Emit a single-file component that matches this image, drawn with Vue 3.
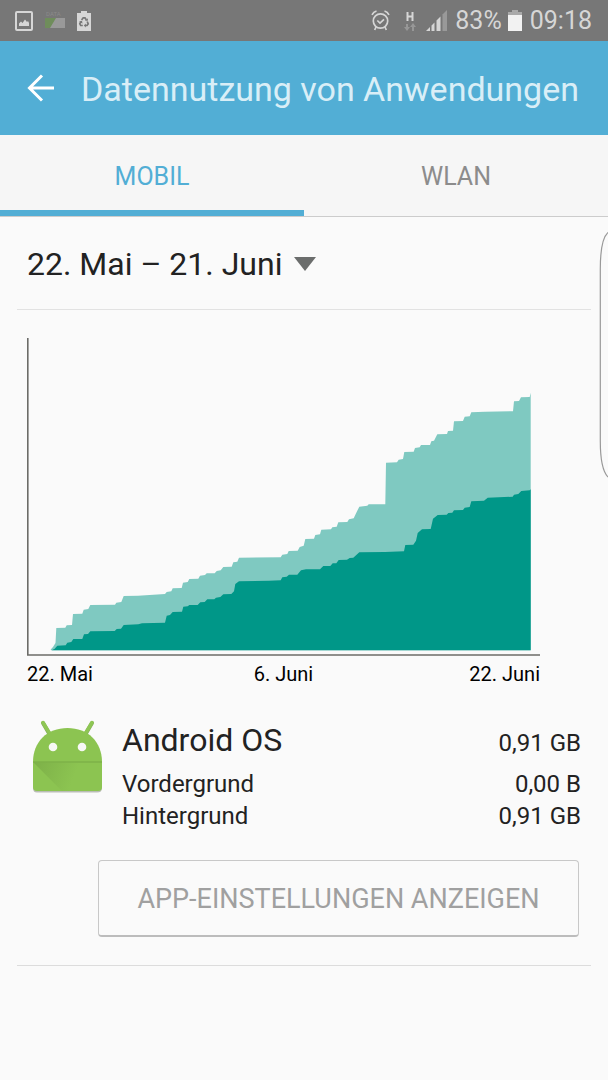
<script setup>
import { ref } from 'vue'

const tabs = ['MOBIL', 'WLAN']
const activeTab = ref('MOBIL')
const period = ref('22. Mai – 21. Juni')
const periods = ['22. Mai – 21. Juni']
const axisLabels = ['22. Mai', '6. Juni', '22. Juni']
const usage = [
  { label: 'Vordergrund', value: '0,00 B' },
  { label: 'Hintergrund', value: '0,91 GB' },
]

const totalPoints =
  '51,650.3 50.7,649.5 53,647 55.5,643 56.3,628 65.3,627.7 66.7,625.3 72,625 73,614 82.3,613.7 83.7,609.7 88.3,609 90.3,605 115,604.7 116.3,602.7 121.3,602 123.7,596 138,595.7 165,594 166.7,592 171.3,591.3 172.7,588.3 181.7,588 183,582.7 187.7,582 189.3,579 198.3,578.7 200,575.7 205,575 206.7,573.3 214.7,573.3 216.7,571 220.7,570.3 223.3,567 231.7,566.7 233.3,562.3 237.3,561.7 239,557.7 280.7,557.3 282.3,554.7 287.3,554 288.7,551 297.7,550.7 299.7,547 303.7,545.7 305.3,539 314,538.7 315.3,535 320,534.3 321.3,529.7 331,529.3 332.3,527.3 336.7,526.7 338.3,522.3 347.3,522 349,519.3 353.7,518.3 355.7,514 359.3,506.7 367.3,505.7 368.7,504.3 385.3,504.3 386,462.7 397,462.3 398.7,459.7 403,459 404.3,452 413.7,451.7 415,448 419.7,447.3 421,445 430,445 431.3,441.3 434,440.7 437.3,434.3 447,434 448,431 453,430.7 454,421.3 463,421 464.7,416.7 469.7,416.3 471.3,412.3 485,411.7 513,411.3 514,401.3 519,401 521,397.3 529.7,397 530.7,392.7 530.7,650.3'
const appPoints =
  '51.7,650.3 54.7,648.7 57.3,645.7 65.7,645.3 67.3,642.7 71.3,642 73.3,639 82.3,639 84,634.3 88,634 90.3,631.3 114.7,631 116.7,629 121,628.7 123.7,625 138.3,624.3 142,623.3 165,622.7 166.7,615.7 170,615 172.7,612 182,611.7 183.3,606.7 187.7,606.3 189.3,605 197.7,605 200.3,602.3 204.7,602 207.3,599.3 214.3,599.3 216,597.7 220.3,597 223.3,594.3 231.3,594 234,591.3 235.3,584 239,581.3 269,580.7 280.7,580.3 282.3,577.3 286.7,576.7 289,574.7 297.3,574.7 301,570.3 306,569.3 320,569.3 323.3,566 330.3,566 332.7,563.3 336.3,563.3 338.7,560 347,559.7 349.7,558 353.3,557.7 359.3,552.3 385,552 404,551.3 405.3,545 413.3,544.7 416,540.7 417.7,533 422,529.3 430.7,529 433,518.7 437.7,515 446.7,514.7 448.3,513 452.3,512.7 454,510.3 463,510 464.7,507.7 469.7,507 471.3,501.3 484,500.7 487.7,497.7 512.7,496.7 514,494.7 518.3,494 521.3,491 529.7,490.3 530.7,489.3 530.7,650.3'
</script>

<template>
  <div class="screen">
    <div class="status">
      <div class="status-left">
        <svg width="18" height="20" viewBox="0 0 18 20" aria-hidden="true">
          <rect x="1" y="1" width="16" height="18" rx="1" fill="none" stroke="#d6d6d6" stroke-width="2" />
          <path d="M4 15V12.500L6 10.500L7.500 12L10 8.500L12 11L13 10L14 12V15Z" fill="#d6d6d6" />
        </svg>
        <svg width="20" height="20" viewBox="0 0 20 20" aria-hidden="true">
          <text x="1" y="5" class="data-word">DATA</text>
          <rect x="0" y="7" width="20" height="10" fill="#999" />
          <path d="M0 7H11L5 17H0Z" fill="#6f8d5b" />
        </svg>
        <svg width="14" height="20" viewBox="0 0 14 20" aria-hidden="true">
          <path d="M4 0H10V2H14V20H0V2H4Z" fill="#d6d6d6" />
          <g fill="none" stroke="#777" stroke-width="1.7">
            <path d="M4.6 9L6.2 6.8H8L9.4 9M10.2 10.5L11.2 12.8L10 14.5H8M5.8 14.5H3.7L2.8 12.8L3.9 10.7" />
          </g>
          <path d="M8 9.7L10.8 9.8L11 7.2ZM8.8 12.4L6.8 14.5L8.8 16.5ZM2 10.8L5 9.8L5.5 12.6Z" fill="#777" />
        </svg>
      </div>
      <div class="status-right">
        <svg width="19" height="21" viewBox="0 0 19 21" fill="none" stroke="#d6d6d6" stroke-width="1.7" aria-hidden="true">
          <circle cx="9.5" cy="11" r="7.2" />
          <path d="M1 4.8Q2.5 1.8 5.5 1M18 4.8Q16.500 1.8 13.500 1M5 17L3.700 20M14 17L15.300 20M6.300 10.500L9 13L13 9.300" />
        </svg>
        <svg class="network" width="12" height="20" viewBox="0 0 12 20" aria-hidden="true">
          <path d="M3.500 1V10M8.500 1V10M3.500 5.500H8.500" fill="none" stroke="#d6d6d6" stroke-width="2" />
          <path d="M2 13H4V16H6L3 20L0 16H2ZM8 20V16H6L9 12L12 16H10V20Z" fill="#979797" />
        </svg>
        <svg class="signal" width="21" height="21" viewBox="0 0 21 21" aria-hidden="true">
          <path d="M0 21L4 17V21ZM5.500 21V15.500L8.500 12.500V21ZM10.500 21V10.500L14.500 6.500V21Z" fill="#d6d6d6" />
          <path d="M16.500 21V4.500L21 0V21Z" fill="#999" />
        </svg>
        <span>83%</span>
        <svg class="battery" width="14" height="21" viewBox="0 0 14 21" aria-hidden="true">
          <path d="M4 0H10V2H14V6H0V2H4Z" fill="#aaa" />
          <path d="M0 5H14V21H0Z" fill="#f2f2f2" />
        </svg>
        <time>09:18</time>
      </div>
    </div>

    <header class="appbar">
      <button class="back" type="button" aria-label="Zurück">
        <svg width="28" height="28" viewBox="0 0 28 28" aria-hidden="true">
          <path d="M15 1.500L2.500 14L15 26.500M2.500 14H27" fill="none" stroke="#fff" stroke-width="3" />
        </svg>
      </button>
      <h1>Datennutzung von Anwendungen</h1>
    </header>

    <div class="tabs" role="tablist">
      <button
        v-for="tab in tabs"
        :key="tab"
        type="button"
        role="tab"
        class="tab"
        :class="{ active: tab === activeTab }"
        :aria-selected="tab === activeTab"
        @click="activeTab = tab"
      >{{ tab }}</button>
    </div>

    <main>
      <div class="period">
        <label class="picker">
          <select v-model="period" aria-label="Zeitraum">
            <option v-for="p in periods" :key="p">{{ p }}</option>
          </select>
          <svg width="22" height="14" viewBox="0 0 22 14" aria-hidden="true">
            <path d="M0 0H22L11 14Z" fill="#6b6d6c" />
          </svg>
        </label>
      </div>

      <section class="chart">
        <svg class="plot" viewBox="27 338 513 318" aria-hidden="true">
          <polygon :points="totalPoints" fill="#7fc9c1" />
          <polygon :points="appPoints" fill="#009788" />
          <path d="M27.800 338V655H540" fill="none" stroke="#6c6c68" stroke-width="1.600" />
        </svg>
        <div class="axis">
          <span v-for="label in axisLabels" :key="label">{{ label }}</span>
        </div>
      </section>

      <section class="app">
        <svg class="robot" width="74" height="76" viewBox="0 0 74 76" aria-hidden="true">
          <path d="M3 67V70Q3 74.500 7 74.500H67Q72 74.500 72 70V67Z" fill="#b9bdb5" />
          <path d="M13 5L20 17M62 5L55 17" stroke="#86ad5d" stroke-width="4" stroke-linecap="round" />
          <path d="M13 4.500L20 16M62 4.500L55 16" stroke="#8ec654" stroke-width="3.500" stroke-linecap="round" />
          <path d="M3 44C3 24 17 10 37.500 10S72 24 72 44V69Q72 73 68 73H7Q3 73 3 69Z" fill="#8cc451" />
          <path d="M3 44L32 73H60L72 61V44Z" fill="url(#fold)" />
          <path d="M3 44H72" stroke="#7eb249" stroke-width="1.400" />
          <circle cx="23" cy="29" r="4.300" fill="#f7f8f5" />
          <circle cx="52" cy="29" r="4.300" fill="#f7f8f5" />
          <defs>
            <linearGradient id="fold" gradientUnits="userSpaceOnUse" x1="3" y1="44" x2="48" y2="62">
              <stop offset="0" stop-color="#7db048" />
              <stop offset="0.900" stop-color="#8cc451" />
            </linearGradient>
          </defs>
        </svg>
        <dl class="stats">
          <div class="row total">
            <dt>Android OS</dt>
            <dd>0,91 GB</dd>
          </div>
          <div v-for="item in usage" :key="item.label" class="row">
            <dt>{{ item.label }}</dt>
            <dd>{{ item.value }}</dd>
          </div>
        </dl>
      </section>

      <div class="action">
        <button type="button" class="settings">APP-EINSTELLUNGEN ANZEIGEN</button>
      </div>
    </main>

    <svg class="edge" width="9" height="248" viewBox="0 0 9 248" aria-hidden="true">
      <path d="M9 1.500C3 7 1.300 20 1.300 38V210C1.300 228 3 240 9 246" fill="#fafafa" stroke="#999" stroke-width="1.200" />
    </svg>
  </div>
</template>

<style>
body {
  margin: 0;
  background: #fafafa;
}
</style>

<style scoped>
.screen {
  position: relative;
  min-height: 100vh;
  overflow: hidden;
  background: #fafafa;
  color: #222;
  font-family: Roboto, "Liberation Sans", sans-serif;
}

.screen svg {
  display: block;
  flex: none;
}

button,
select {
  margin: 0;
  padding: 0;
  border: 0;
  background: none;
  color: inherit;
  font: inherit;
}

.status {
  display: flex;
  align-items: center;
  justify-content: space-between;
  height: 41px;
  padding: 0 16px 0 15px;
  box-sizing: border-box;
  background: #777;
  color: #d6d6d6;
  font-size: 25px;
  line-height: 42px;
}

.status-left,
.status-right {
  display: flex;
  align-items: center;
}

.status-left {
  gap: 12px;
}

.data-word {
  fill: #8a8a8a;
  font-size: 6px;
}

.network {
  margin-left: 14px;
}

.signal {
  margin: 0 8px 0 10px;
}

.battery {
  margin: 0 8px 0 6px;
}

.appbar {
  display: flex;
  align-items: center;
  height: 94px;
  padding-left: 27px;
  background: #52aed5;
}

.back {
  margin-right: 26px;
}

h1 {
  margin: 0;
  padding-top: 2px;
  color: #d9eef7;
  font-size: 34px;
  font-weight: 400;
  line-height: 40px;
  white-space: nowrap;
}

.tabs {
  display: flex;
  border-bottom: 1px solid #ccc;
  background: #f6f6f6;
}

.tab {
  flex: 1;
  height: 81px;
  padding-top: 8px;
  border-bottom: 6px solid transparent;
  color: #8c8c8c;
  font-size: 25px;
}

.tab.active {
  border-color: #52aed5;
  color: #52aed5;
}

main {
  padding: 0 17px;
}

.period {
  display: flex;
  align-items: center;
  height: 93px;
  padding: 2px 0 0 10px;
  box-sizing: border-box;
  border-bottom: 1px solid #e2e2e2;
}

.picker {
  display: flex;
  align-items: center;
  gap: 11px;
}

select {
  appearance: none;
  font-size: 32px;
  line-height: 40px;
}

.chart {
  padding: 28px 51px 0 10px;
}

.plot {
  width: 100%;
  height: auto;
}

.axis {
  display: grid;
  grid-template-columns: 1fr auto 1fr;
  padding-top: 6px;
  color: #000;
  font-size: 20px;
  line-height: 24px;
}

.axis span:last-child {
  text-align: right;
}

.app {
  display: flex;
  gap: 18px;
  padding: 32px 10px 0 13px;
}

.stats {
  flex: 1;
  margin: 0;
  font-size: 24px;
  line-height: 32px;
}

.row {
  display: flex;
  justify-content: space-between;
}

dd {
  margin: 0;
}

.total {
  align-items: baseline;
  height: 50px;
}

.total dt {
  font-size: 32px;
  line-height: 44px;
}

.action {
  padding: 28px 12px 28px 81px;
  border-bottom: 1px solid #dcdcdc;
}

.settings {
  width: 100%;
  height: 77px;
  padding-top: 2px;
  border: 1px solid #c8c8c8;
  border-bottom: 2px solid #bcbcbc;
  border-radius: 4px;
  color: #a0a0a0;
  font-size: 27px;
}

.edge {
  position: absolute;
  top: 231px;
  right: 0;
}
</style>
